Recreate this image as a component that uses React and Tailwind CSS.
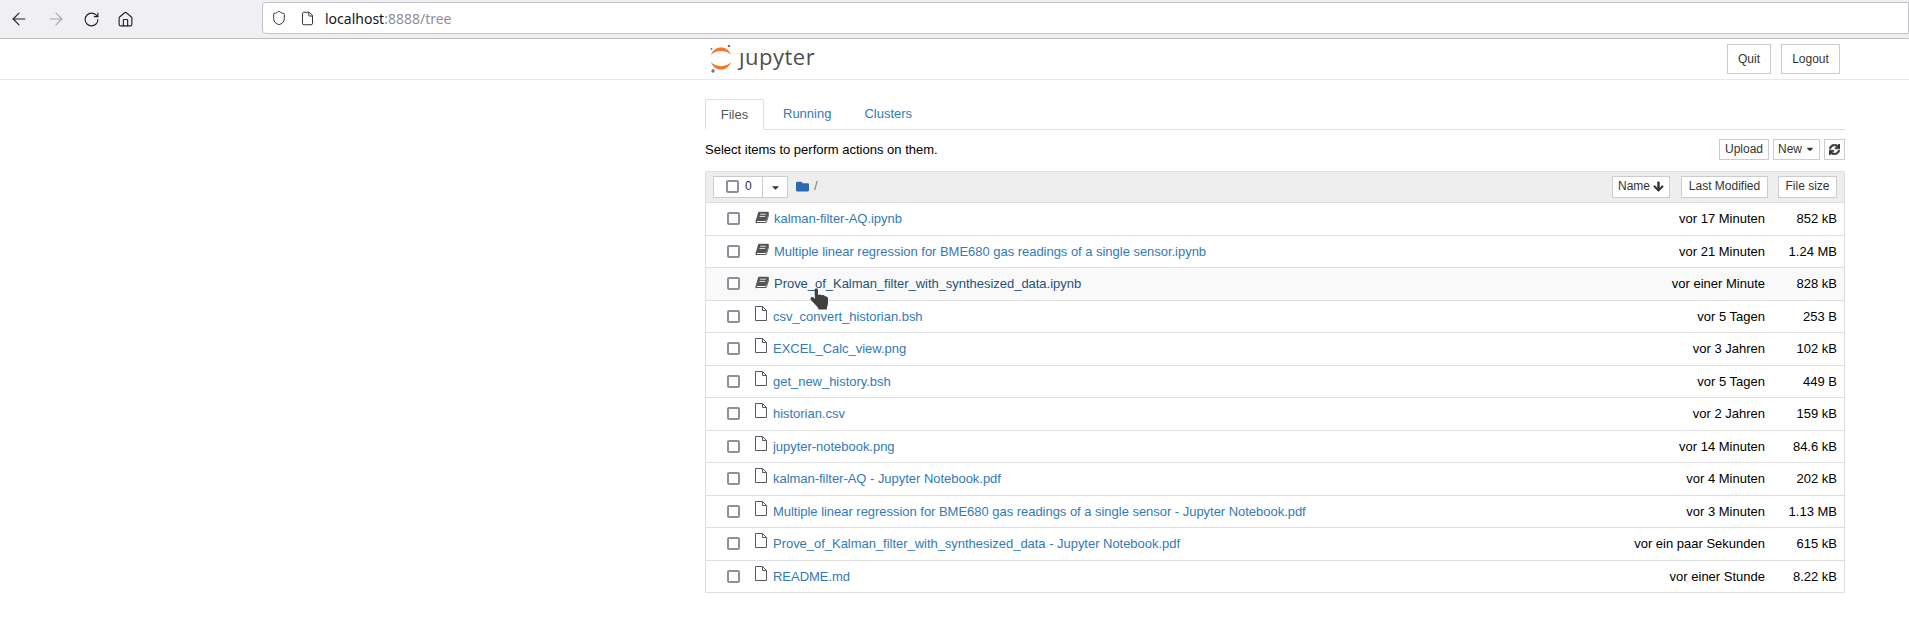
import { ArrowLeft, ArrowRight, RotateCw, Home, Shield, File } from 'lucide-react'
import { FaArrowDown, FaCaretDown, FaFolder, FaSync } from 'react-icons/fa'

const notebooks = [
  { name: 'kalman-filter-AQ.ipynb', time: 'vor 17 Minuten', size: '852 kB' },
  { name: 'Multiple linear regression for BME680 gas readings of a single sensor.ipynb', time: 'vor 21 Minuten', size: '1.24 MB' },
  { name: 'Prove_of_Kalman_filter_with_synthesized_data.ipynb', time: 'vor einer Minute', size: '828 kB', hover: true },
]

const files = [
  { name: 'csv_convert_historian.bsh', time: 'vor 5 Tagen', size: '253 B' },
  { name: 'EXCEL_Calc_view.png', time: 'vor 3 Jahren', size: '102 kB' },
  { name: 'get_new_history.bsh', time: 'vor 5 Tagen', size: '449 B' },
  { name: 'historian.csv', time: 'vor 2 Jahren', size: '159 kB' },
  { name: 'jupyter-notebook.png', time: 'vor 14 Minuten', size: '84.6 kB' },
  { name: 'kalman-filter-AQ - Jupyter Notebook.pdf', time: 'vor 4 Minuten', size: '202 kB' },
  { name: 'Multiple linear regression for BME680 gas readings of a single sensor - Jupyter Notebook.pdf', time: 'vor 3 Minuten', size: '1.13 MB' },
  { name: 'Prove_of_Kalman_filter_with_synthesized_data - Jupyter Notebook.pdf', time: 'vor ein paar Sekunden', size: '615 kB' },
  { name: 'README.md', time: 'vor einer Stunde', size: '8.22 kB' },
]

function Checkbox() {
  return <span className="block w-[13px] h-[13px] border-2 border-[#8f8f9d] rounded-[2px] bg-white shrink-0" />
}

function BookIcon() {
  return (
    <svg viewBox="0 0 14 12.5" className="block w-[14px] h-[13px]" fill="#555">
      <path d="M4 0.5h9.2c.5 0 .8.4.6.9l-2.3 7.4c-.2.6-.6.9-1.2.9H2.600c-.6 0-.9.5-.8 1h8.600c.4 0 .7-.2.9-.6l2.400-7.800.7.5-2.500 8c-.2.6-.7 1-1.300 1H2C1 12.300.2 11.300.5 10.200L3 1.400C3.200.8 3.500.5 4 .5z" />
      <path d="M5.200 3h5.700M4.500 5.200h5.700" stroke="#fff" strokeWidth="0.8" />
    </svg>
  )
}

function PageIcon() {
  return (
    <svg viewBox="0 0 12 15" className="block w-[12px] h-[15px]" fill="none" stroke="#5a5560" strokeWidth="1">
      <path d="M.5.5h7l4 4v10H.5z" />
      <path d="M7.500.5v4h4" />
    </svg>
  )
}

function TopButton({ children, className }) {
  return (
    <span className={`flex items-center justify-center border border-[#ccc] bg-white text-[#333] text-[12px] ${className}`}>
      {children}
    </span>
  )
}

function FileRow({ item, icon, nameClass }) {
  return (
    <div className={`flex items-center h-[32.5px] border-t border-[#ddd] pl-[21px] pr-[7px] ${item.hover ? 'bg-[#f9f9f9]' : ''}`}>
      <Checkbox />
      <span className={`ml-[15px] shrink-0 ${nameClass}`}>{icon}</span>
      <span className={`flex-1 truncate tracking-[-0.03px] ${item.hover ? 'text-[#23527c]' : 'text-[#337ab7]'}`}>{item.name}</span>
      <span className="w-[200px] text-right">{item.time}</span>
      <span className="w-[72px] text-right">{item.size}</span>
    </div>
  )
}

export default function App() {
  return (
    <div className="relative min-h-[641px] bg-white font-['Liberation_Sans',Arial,sans-serif] text-[13px] text-[#000]">
      {/* Browser toolbar */}
      <div className="flex items-center h-[39px] bg-[#f0f0f4] border-b border-[#bdbdbd]">
        <div className="flex items-center gap-[17px] pl-[9px] w-[262px] text-[#222]">
          <ArrowLeft size={20} strokeWidth={1.4} />
          <ArrowRight size={20} strokeWidth={1.4} className="text-[#a8a8ac]" />
          <RotateCw size={17} strokeWidth={1.6} />
          <Home size={17} strokeWidth={1.6} />
        </div>
        <div className="flex items-center flex-1 h-[32px] -mt-[2px] bg-white border border-[#c4c4c8] rounded-l-[4px] pl-[8px] font-['Noto_Sans',sans-serif] text-[14px]">
          <Shield size={16} strokeWidth={1.5} className="text-[#333]" />
          <File size={15} strokeWidth={1.6} className="ml-[13px] text-[#333]" />
          <span className="ml-[10px] text-[#15141a]">localhost<span className="text-[#8f8f9d]">:8888/tree</span></span>
        </div>
      </div>

      {/* Jupyter header */}
      <div className="flex h-[41px] pl-[705px] border-b border-[#e7e7e7]">
        <div className="flex items-start w-[1140px]">
          <svg viewBox="0 0 26 30" className="w-[26px] h-[30px] mt-[4px] ml-[3px]">
            <path d="M3 12C6 2 20 2 23 12 19 6.500 7 6.500 3 12z" fill="#f37726" />
            <path d="M3 19C6 29 20 29 23 19 19 24.500 7 24.500 3 19z" fill="#f37726" />
            <circle cx="21" cy="3" r="1.300" fill="#767677" />
            <circle cx="3.500" cy="6" r="1" fill="#767677" />
            <circle cx="5" cy="28" r="1.700" fill="#767677" />
          </svg>
          <span className="ml-[5px] font-['Open_Sans',sans-serif] text-[22px] leading-[34px] tracking-[0.5px] text-[#4e4e4e]">ȷupyter</span>
          <div className="flex ml-auto mr-[5px] mt-[5px] gap-[10px]">
            <TopButton className="w-[44px] h-[30px]">Quit</TopButton>
            <TopButton className="w-[59px] h-[30px]">Logout</TopButton>
          </div>
        </div>
      </div>

      <div className="w-[1140px] ml-[705px]">
        {/* Tabs */}
        <div className="flex h-[31px] mt-[19px] border-b border-[#ddd] text-[#337ab7]">
          <span className="flex items-center justify-center w-[59px] h-[31px] border border-[#ddd] border-b-white rounded-t-[2px] bg-white text-[#555]">Files</span>
          <span className="flex items-center ml-[19px]">Running</span>
          <span className="flex items-center ml-[33px]">Clusters</span>
        </div>

        {/* Actions */}
        <div className="flex items-center h-[21px] mt-[9px]">
          <span>Select items to perform actions on them.</span>
          <div className="flex ml-auto gap-[4px]">
            <TopButton className="w-[50px] h-[21px] pb-[1px]">Upload</TopButton>
            <TopButton className="w-[47px] h-[21px] gap-[3px] pb-[1px]">New <FaCaretDown size={10} /></TopButton>
            <TopButton className="w-[21px] h-[21px]"><FaSync size={11} stroke="currentColor" strokeWidth={30} /></TopButton>
          </div>
        </div>

        {/* File list */}
        <div className="mt-[11px] border border-[#ddd] rounded-t-[2px]">
          <div className="flex items-center h-[30px] bg-[#eee] pl-[7px] text-[#333]">
            <div className="flex h-[22px] border border-[#ccc] bg-white w-[75px]">
              <span className="flex items-start w-[49px] pl-[12px] pt-[3px] gap-[6px] border-r border-[#ccc]">
                <Checkbox />
                <span className="-mt-[3px] text-[12px]">0</span>
              </span>
              <span className="flex flex-1 items-center justify-center"><FaCaretDown size={11} /></span>
            </div>
            <FaFolder size={13} className="ml-[8px] -mt-[2px] text-[#2a6bb0]" />
            <span className="ml-[5px] -mt-[3px] text-[#777]">/</span>
            <div className="flex ml-auto mr-[7px] text-[12px]">
              <TopButton className="w-[58px] h-[22px] gap-[3px] pb-[2px]">Name <FaArrowDown size={11} stroke="currentColor" strokeWidth={30} /></TopButton>
              <TopButton className="w-[87px] h-[22px] ml-[11px] pb-[2px]">Last Modified</TopButton>
              <TopButton className="w-[59px] h-[22px] ml-[10px] pb-[2px]">File size</TopButton>
            </div>
          </div>
          {notebooks.map((item) => (
            <FileRow key={item.name} item={item} icon={<BookIcon />} nameClass="w-[19px] -mt-[3px]" />
          ))}
          {files.map((item) => (
            <FileRow key={item.name} item={item} icon={<PageIcon />} nameClass="w-[18px] -mt-[6px]" />
          ))}
        </div>
      </div>

      {/* Mouse pointer */}
      <svg viewBox="0 0 20 22" className="absolute left-[810px] top-[288px] w-[20px] h-[22px]" fill="#3f3f3f">
        <path d="M4.500 2c0-2 3.500-2 3.500 0v5l1.200-.3c.8-.4 2-.2 2.300.6l1-.1c.9-.3 1.900.1 2.100.9l.9.1c1.300.1 2.500.9 2.500 2.300v4.500c0 1.800-.6 3-1 4.500l-.2 2H8.500l-.4-1.500C6.500 17.500 3.500 15 1 12c-1.500-1.800.8-3.800 2.500-2.500L5 11z" />
      </svg>
    </div>
  )
}
